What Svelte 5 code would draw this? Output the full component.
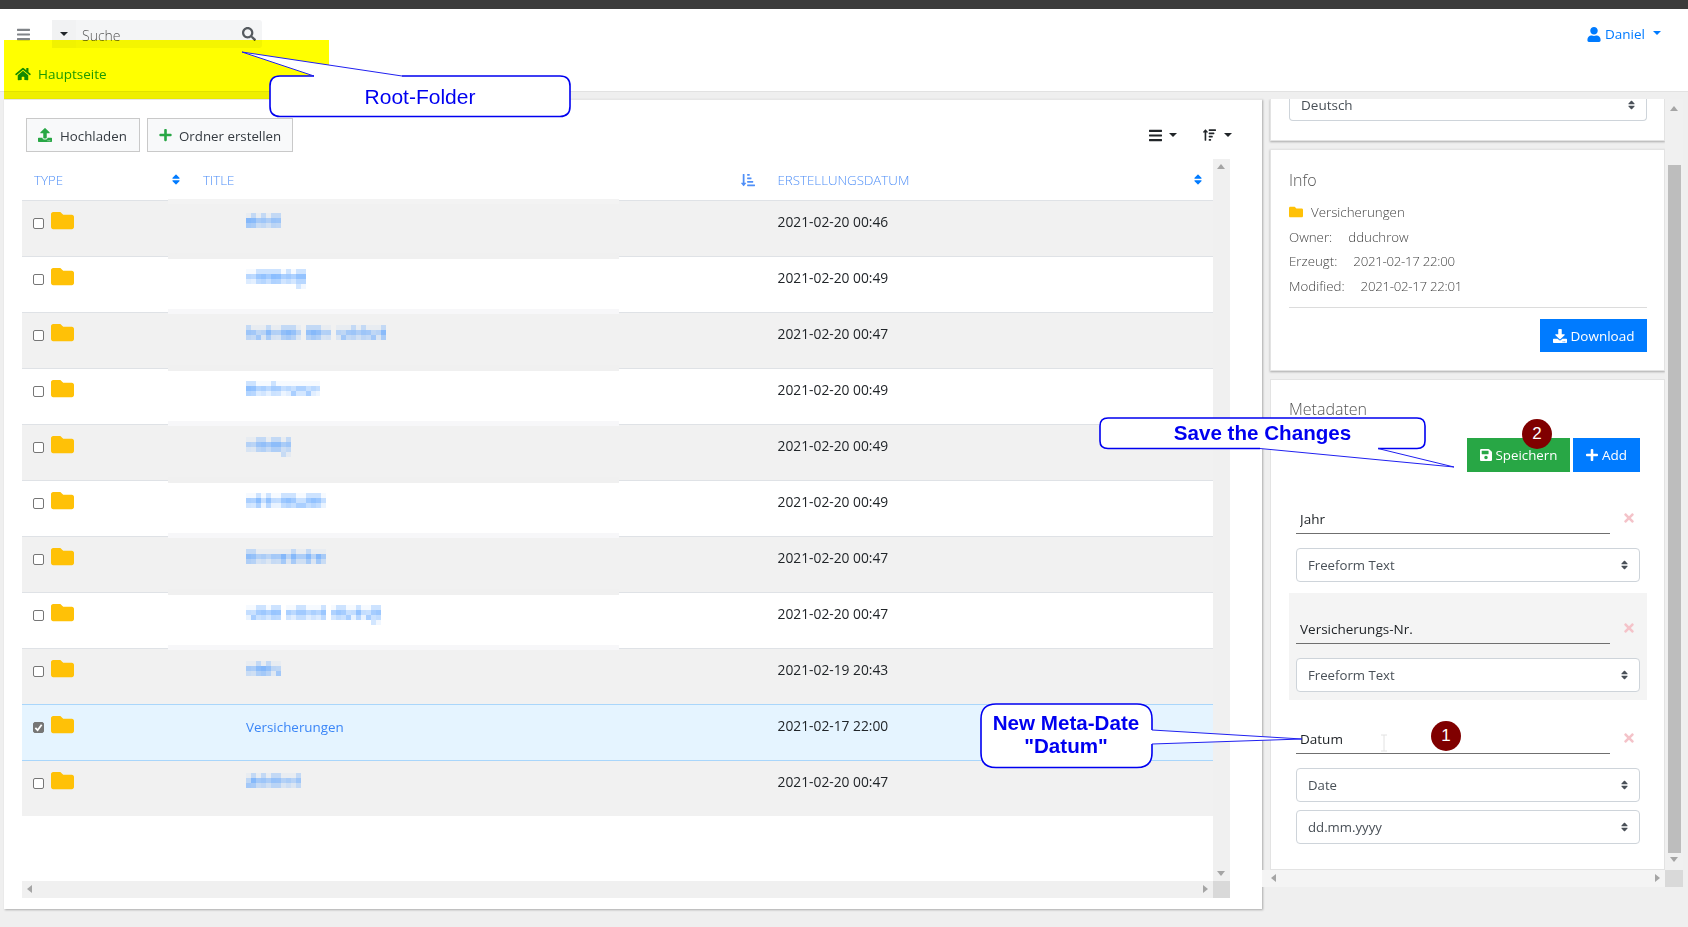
<script>
  // Font Awesome style glyphs: [viewBox width, path]
  const icons = {
    home: [576, 'M280.37 148.26L96 300.11V464a16 16 0 0 0 16 16l112.06-.29a16 16 0 0 0 15.92-16V368a16 16 0 0 1 16-16h64a16 16 0 0 1 16 16v95.64a16 16 0 0 0 16 16.05L464 480a16 16 0 0 0 16-16V300L295.67 148.26a12.19 12.19 0 0 0-15.3 0zM571.6 251.47L488 182.56V44.05a12 12 0 0 0-12-12h-56a12 12 0 0 0-12 12v72.61L318.47 43a48 48 0 0 0-61 0L4.34 251.47a12 12 0 0 0-1.6 16.9l25.5 31A12 12 0 0 0 45.15 301l235.22-193.74a12.19 12.19 0 0 1 15.3 0L530.9 301a12 12 0 0 0 16.9-1.6l25.5-31a12 12 0 0 0-1.7-16.93z'],
    search: [512, 'M505 442.7L405.3 343c-4.5-4.5-10.6-7-17-7H372c27.6-35.3 44-79.7 44-128C416 93.1 322.9 0 208 0S0 93.1 0 208s93.1 208 208 208c48.3 0 92.7-16.4 128-44v16.3c0 6.4 2.5 12.5 7 17l99.7 99.7c9.4 9.4 24.6 9.4 33.9 0l28.3-28.3c9.4-9.4 9.4-24.6.1-34zM208 336c-70.7 0-128-57.2-128-128 0-70.7 57.2-128 128-128 70.7 0 128 57.2 128 128 0 70.7-57.2 128-128 128z'],
    user: [448, 'M224 256c70.7 0 128-57.3 128-128S294.7 0 224 0 96 57.3 96 128s57.3 128 128 128zm89.6 32h-16.7c-22.2 10.2-46.9 16-72.9 16s-50.6-5.8-72.9-16h-16.7C60.2 288 0 348.2 0 422.4V464c0 26.5 21.5 48 48 48h352c26.5 0 48-21.5 48-48v-41.6c0-74.2-60.2-134.4-134.4-134.4z'],
    bars: [448, 'M16 132h416c8.837 0 16-7.163 16-16V76c0-8.837-7.163-16-16-16H16C7.163 60 0 67.163 0 76v40c0 8.837 7.163 16 16 16zm0 160h416c8.837 0 16-7.163 16-16v-40c0-8.837-7.163-16-16-16H16c-8.837 0-16 7.163-16 16v40c0 8.837 7.163 16 16 16zm0 160h416c8.837 0 16-7.163 16-16v-40c0-8.837-7.163-16-16-16H16c-8.837 0-16 7.163-16 16v40c0 8.837 7.163 16 16 16z'],
    plus: [448, 'M416 208H272V64c0-17.67-14.33-32-32-32h-32c-17.67 0-32 14.33-32 32v144H32c-17.67 0-32 14.33-32 32v32c0 17.67 14.33 32 32 32h144v144c0 17.67 14.33 32 32 32h32c17.67 0 32-14.33 32-32V304h144c17.67 0 32-14.33 32-32v-32c0-17.67-14.33-32-32-32z'],
    times: [352, 'M242.72 256l100.07-100.07c12.28-12.28 12.28-32.19 0-44.48l-22.24-22.24c-12.28-12.28-32.19-12.28-44.48 0L176 189.28 75.93 89.21c-12.28-12.28-32.19-12.28-44.48 0L9.21 111.45c-12.28 12.28-12.28 32.19 0 44.48L109.28 256 9.21 356.07c-12.28 12.28-12.28 32.19 0 44.48l22.24 22.24c12.28 12.28 32.2 12.28 44.48 0L176 322.72l100.07 100.07c12.28 12.28 32.2 12.28 44.48 0l22.24-22.24c12.28-12.28 12.28-32.19 0-44.48L242.72 256z'],
    folder: [512, 'M464 128H272l-64-64H48C21.49 64 0 85.49 0 112v288c0 26.51 21.49 48 48 48h416c26.51 0 48-21.49 48-48V176c0-26.51-21.49-48-48-48z'],
    sort: [320, 'M41 288h238c21.4 0 32.1 25.9 17 41L177 448c-9.4 9.4-24.6 9.4-33.9 0L24 329c-15.1-15.1-4.4-41 17-41zm255-105L177 64c-9.4-9.4-24.6-9.4-33.9 0L24 183c-15.1 15.1-4.4 41 17 41h238c21.4 0 32.1-25.9 17-41z'],
    upload: [512, 'M296 384h-80c-13.3 0-24-10.7-24-24V192h-87.7c-17.8 0-26.7-21.5-14.1-34.1L242.3 5.7c7.5-7.5 19.8-7.5 27.3 0l152.2 152.2c12.6 12.6 3.7 34.1-14.1 34.1H320v168c0 13.3-10.7 24-24 24zm216-8v112c0 13.3-10.7 24-24 24H24c-13.3 0-24-10.7-24-24V376c0-13.3 10.7-24 24-24h136v8c0 30.9 25.1 56 56 56h80c30.9 0 56-25.1 56-56v-8h136c13.3 0 24 10.7 24 24zm-124 88c0-11-9-20-20-20s-20 9-20 20 9 20 20 20 20-9 20-20zm64 0c0-11-9-20-20-20s-20 9-20 20 9 20 20 20 20-9 20-20z'],
    download: [512, 'M216 0h80c13.3 0 24 10.7 24 24v168h87.7c17.8 0 26.7 21.5 14.1 34.1L269.7 378.3c-7.5 7.5-19.8 7.5-27.3 0L90.1 226.1c-12.6-12.6-3.7-34.1 14.1-34.1H192V24c0-13.3 10.7-24 24-24zm296 376v112c0 13.3-10.7 24-24 24H24c-13.3 0-24-10.7-24-24V376c0-13.3 10.7-24 24-24h146.7l49 49c20.1 20.1 52.5 20.1 72.6 0l49-49H488c13.3 0 24 10.7 24 24zm-124 88c0-11-9-20-20-20s-20 9-20 20 9 20 20 20 20-9 20-20zm64 0c0-11-9-20-20-20s-20 9-20 20 9 20 20 20 20-9 20-20z'],
    save: [448, 'M433.941 129.941l-83.882-83.882A48 48 0 0 0 316.118 32H48C21.49 32 0 53.49 0 80v352c0 26.51 21.49 48 48 48h352c26.51 0 48-21.49 48-48V163.882a48 48 0 0 0-14.059-33.941zM224 416c-35.346 0-64-28.654-64-64 0-35.346 28.654-64 64-64s64 28.654 64 64c0 35.346-28.654 64-64 64zm96-304.52V212c0 6.627-5.373 12-12 12H76c-6.627 0-12-5.373-12-12V108c0-6.627 5.373-12 12-12h228.52c3.183 0 6.235 1.264 8.485 3.515l3.48 3.48A11.996 11.996 0 0 1 320 111.48z'],
    sortUp: [512, 'M16 160h48v304a16 16 0 0 0 16 16h32a16 16 0 0 0 16-16V160h48c14.21 0 21.38-17.24 11.31-27.31l-80-96a16 16 0 0 0-22.62 0l-80 96C-5.35 142.74 1.78 160 16 160zM304 416h-64a16 16 0 0 0-16 16v32a16 16 0 0 0 16 16h64a16 16 0 0 0 16-16v-32a16 16 0 0 0-16-16zm128-256H240a16 16 0 0 0-16 16v32a16 16 0 0 0 16 16h192a16 16 0 0 0 16-16v-32a16 16 0 0 0-16-16zm-64 128H240a16 16 0 0 0-16 16v32a16 16 0 0 0 16 16h128a16 16 0 0 0 16-16v-32a16 16 0 0 0-16-16zM496 32H240a16 16 0 0 0-16 16v32a16 16 0 0 0 16 16h256a16 16 0 0 0 16-16V48a16 16 0 0 0-16-16z'],
    sortDownAlt: [512, 'M176 352h-48V48a16 16 0 0 0-16-16H80a16 16 0 0 0-16 16v304H16c-14.19 0-21.37 17.24-11.31 27.31l80 96a16 16 0 0 0 22.62 0l80-96C197.35 369.26 190.22 352 176 352zM240 96h64a16 16 0 0 0 16-16V48a16 16 0 0 0-16-16h-64a16 16 0 0 0-16 16v32a16 16 0 0 0 16 16zm0 128h128a16 16 0 0 0 16-16v-32a16 16 0 0 0-16-16H240a16 16 0 0 0-16 16v32a16 16 0 0 0 16 16zm256 192H240a16 16 0 0 0-16 16v32a16 16 0 0 0 16 16h256a16 16 0 0 0 16-16v-32a16 16 0 0 0-16-16zm-256-64h192a16 16 0 0 0 16-16v-32a16 16 0 0 0-16-16H240a16 16 0 0 0-16 16v32a16 16 0 0 0 16 16z']
  };

  // w = width of the pixelated (censored) title, tail = has a descender, gaps = word breaks
  const rows = [
    { w: 35, date: '2021-02-20 00:46' },
    { w: 60, tail: true, date: '2021-02-20 00:49' },
    { w: 140, gaps: [11, 17], date: '2021-02-20 00:47' },
    { w: 74, date: '2021-02-20 00:49' },
    { w: 46, tail: true, date: '2021-02-20 00:49' },
    { w: 81, date: '2021-02-20 00:49' },
    { w: 81, date: '2021-02-20 00:47' },
    { w: 135, tail: true, gaps: [7, 16], date: '2021-02-20 00:47' },
    { w: 36, date: '2021-02-19 20:43' },
    { title: 'Versicherungen', selected: true, date: '2021-02-17 22:00' },
    { w: 55, date: '2021-02-20 00:47' }
  ];

  // mosaic cells for the censored titles
  function cells(row, seed) {
    const out = [];
    const n = Math.round(row.w / 5);
    for (let c = 0; c < n; c++) {
      if (row.gaps && row.gaps.includes(c)) continue;
      for (let r = 0; r < 3; r++) {
        const v = ((c * 37 + r * 91 + seed * 53 + c * c * 7) % 23) / 23;
        let a;
        if (r === 0) a = v > 0.55 ? 0.28 : 0.05;
        else if (r === 1) a = v * 0.38 + 0.3;
        else a = v * 0.4 + 0.1;
        out.push({ x: c * 5, y: r * 5, a: a.toFixed(2) });
      }
    }
    if (row.tail) {
      out.push({ x: (n - 2) * 5, y: 15, a: '0.25' }, { x: (n - 1) * 5, y: 15, a: '0.08' });
    }
    return out;
  }

  const fields = [
    { name: 'Jahr', selects: ['Freeform Text'] },
    { name: 'Versicherungs-Nr.', selects: ['Freeform Text'], shaded: true },
    { name: 'Datum', selects: ['Date', 'dd.mm.yyyy'] }
  ];

  // speech bubbles: fill outline, heavy box edge, thin tail
  const bubbles = [
    {
      fill: 'M280 76H314L242 52L402 76H560Q570 76 570 86V106.5Q570 116.5 560 116.5H280Q270 116.5 270 106.5V86Q270 76 280 76Z',
      box: 'M402 76H560Q570 76 570 86V106.5Q570 116.5 560 116.5H280Q270 116.5 270 106.5V86Q270 76 280 76H314',
      tail: 'M314 76L242 52L402 76'
    },
    {
      fill: 'M1108 418H1417Q1425 418 1425 426V441Q1425 448.5 1417 448.5H1378L1454 467L1260 448.5H1108Q1100 448.5 1100 441V426Q1100 418 1108 418Z',
      box: 'M1260 448.5H1108Q1100 448.5 1100 441V426Q1100 418 1108 418H1417Q1425 418 1425 426V441Q1425 448.5 1417 448.5H1378',
      tail: 'M1378 448.5L1454 467L1260 448.5'
    },
    {
      fill: 'M996 704H1137Q1152 704 1152 719V730L1302 739L1152 744V753Q1152 767.5 1137 767.5H996Q981 767.5 981 753V719Q981 704 996 704Z',
      box: 'M1152 744V753Q1152 767.5 1137 767.5H996Q981 767.5 981 753V719Q981 704 996 704H1137Q1152 704 1152 719V730',
      tail: 'M1152 730L1302 739L1152 744'
    }
  ];
</script>

{#snippet icon(name, w, h, color)}
  <svg class="ico" width={w} height={h} viewBox="0 0 {icons[name][0]} 512" fill={color} preserveAspectRatio="xMidYMid meet" aria-hidden="true"><path d={icons[name][1]} /></svg>
{/snippet}

{#snippet select(label)}
  <div class="select"><span>{label}</span>{@render icon('sort', 7, 12, '#4a5058')}</div>
{/snippet}

<div class="screen">
  <div class="topbar"></div>

  <header class="header">
    <div class="head-row">
      <button class="hamburger" aria-label="Menü">{@render icon('bars', 13, 15, '#808488')}</button>
      <div class="search">
        <span class="search-drop"><i class="caret dark"></i></span>
        <span class="search-text">Suche</span>
        {@render icon('search', 14, 14, '#555a5f')}
      </div>
      <div class="grow"></div>
      <div class="user">
        {@render icon('user', 14, 15, '#007bff')}
        <span>Daniel</span>
        <i class="caret blue"></i>
      </div>
    </div>
    <nav class="crumb">{@render icon('home', 16, 14, '#138a2f')}<span>Hauptseite</span></nav>
  </header>

  <div class="content">
    <main class="panel">
      <div class="toolbar">
        <button class="btn upload">{@render icon('upload', 14, 14, '#28a745')}<span>Hochladen</span></button>
        <button class="btn btn-plus">{@render icon('plus', 13, 14, '#28a745')}<span>Ordner erstellen</span></button>
        <div class="grow"></div>
        <div class="tool">{@render icon('bars', 13, 15, '#212529')}<i class="caret dark"></i></div>
        <div class="tool second">{@render icon('sortUp', 13, 14, '#212529')}<i class="caret dark"></i></div>
      </div>

      <div class="tablewrap">
        <div class="table">
          <div class="thead grid">
            <div class="th"><span>TYPE</span>{@render icon('sort', 8, 13, '#007bff')}</div>
            <div class="th"><span>TITLE</span>{@render icon('sortDownAlt', 14, 14, '#4f8ff7')}</div>
            <div class="th"><span>ERSTELLUNGSDATUM</span>{@render icon('sort', 8, 13, '#007bff')}</div>
          </div>
          {#each rows as row, i}
            <div class="tr grid" class:odd={i % 2 === 0} class:selected={row.selected}>
              {#if !row.selected && i !== 10}
                <div class="smudge" class:first={i === 0}></div>
              {/if}
              <div class="td first-cell">
                <span class="check" class:on={row.selected}>
                  {#if row.selected}
                    <svg width="9" height="9" viewBox="0 0 10 10" aria-hidden="true"><path d="M1.5 5.5L4 8L8.5 2" fill="none" stroke="#fff" stroke-width="2" /></svg>
                  {/if}
                </span>
                {@render icon('folder', 23, 23, '#ffc107')}
              </div>
              <div class="td title-cell">
                {#if row.title}
                  <span class="link">{row.title}</span>
                {:else}
                  <svg class="mosaic" width={row.w} height="20" aria-hidden="true">
                    {#each cells(row, i) as c}
                      <rect x={c.x} y={c.y} width="5" height="5" fill="#4d9bff" opacity={c.a} />
                    {/each}
                  </svg>
                {/if}
              </div>
              <div class="td date-cell">{row.date}</div>
            </div>
          {/each}
        </div>
        <div class="vbar">
          <i class="arrow up"></i>
          <i class="arrow down"></i>
        </div>
        <div class="hbar">
          <i class="arrow left"></i>
          <i class="arrow right"></i>
        </div>
        <div class="corner"></div>
      </div>
    </main>

    <aside class="side">
      <div class="side-view">
        <section class="card clipped">
          <div class="select lang"><span>Deutsch</span>{@render icon('sort', 7, 12, '#4a5058')}</div>
        </section>

        <section class="card info">
          <h5>Info</h5>
          <div class="line name">{@render icon('folder', 14, 14, '#ffc107')}<span>Versicherungen</span></div>
          <div class="line"><span>Owner:</span><span class="val">dduchrow</span></div>
          <div class="line"><span>Erzeugt:</span><span class="val stamp">2021-02-17 22:00</span></div>
          <div class="line"><span>Modified:</span><span class="val stamp">2021-02-17 22:01</span></div>
          <hr />
          <div class="actions">
            <button class="solid blue-btn dl">{@render icon('download', 14, 14, '#fff')}<span>Download</span></button>
          </div>
        </section>

        <section class="card meta">
          <h5>Metadaten</h5>
          <div class="actions tight">
            <button class="solid green-btn save">{@render icon('save', 12, 14, '#fff')}<span>Speichern</span></button>
            <button class="solid blue-btn add">{@render icon('plus', 12, 14, '#fff')}<span>Add</span></button>
          </div>
          {#each fields as f}
            <div class="field" class:shaded={f.shaded}>
              <div class="name-row">
                <input value={f.name} readonly />
                {@render icon('times', 10, 14, '#f4c3c9')}
              </div>
              {#each f.selects as s}
                {@render select(s)}
              {/each}
            </div>
          {/each}
        </section>
      </div>
      <div class="side-v">
        <i class="arrow up"></i>
        <div class="thumb"></div>
        <i class="arrow down"></i>
      </div>
      <div class="side-h">
        <i class="arrow left"></i>
        <i class="arrow right"></i>
      </div>
      <div class="corner"></div>
    </aside>
  </div>

  <!-- Anmerkungen über dem Screenshot -->
  <div class="highlight"></div>
  <svg class="notes" width="1688" height="927" aria-hidden="true">
    {#each bubbles as b}
      <path d={b.fill} fill="#fff" />
      <path d={b.box} fill="none" stroke="#0000f0" stroke-width="1.6" />
      <path d={b.tail} fill="none" stroke="#2020f0" stroke-width="1" />
    {/each}
    <text x="420" y="103.5" class="note big" text-anchor="middle">Root-Folder</text>
    <text x="1262.5" y="440" class="note strong" text-anchor="middle">Save the Changes</text>
    <text x="1066" y="730" class="note strong" text-anchor="middle">New Meta-Date</text>
    <text x="1066" y="753" class="note strong" text-anchor="middle">"Datum"</text>
    <path d="M1381 735h6M1384 735v16M1381 751h6" stroke="#e2e2e2" fill="none" />
  </svg>
  <div class="badge two">2</div>
  <div class="badge one">1</div>
</div>

<style>
  :global(body) {
    margin: 0;
    background: #efefef;
    font-family: "Open Sans", "Liberation Sans", sans-serif;
    font-size: 14px;
    color: #212529;
  }

  .screen { position: relative; width: 1688px; height: 927px; overflow: hidden; background: #efefef; isolation: isolate; }
  .topbar { height: 9px; background: #3b3b3b; }
  .grow { flex: 1; }
  .ico { display: block; flex: none; }

  /* kopf */
  .header { height: 83px; box-sizing: border-box; background: #fff; border-bottom: 1px solid #e2e2e2; }
  .head-row { display: flex; align-items: center; height: 28px; padding: 11px 27px 0 17px; }
  .hamburger { width: 35px; padding: 0; border: 0; background: none; display: flex; }
  .search { display: flex; align-items: center; width: 210px; height: 28px; background: #f4f5f6; border-radius: 3px; color: #555; padding-right: 6px; box-sizing: border-box; }
  .search-drop { width: 24px; height: 28px; background: #f1f2f3; display: flex; align-items: center; justify-content: center; }
  .search-text { flex: 1; padding: 2px 0 0 6px; font-weight: 300; }
  .user { display: flex; align-items: center; color: #007bff; gap: 4px; font-size: 13.5px; }
  .user .caret { margin-left: 4px; margin-top: -3px; }

  .caret { display: block; width: 0; height: 0; border-left: 4.5px solid transparent; border-right: 4.5px solid transparent; border-top: 4.5px solid #212529; }
  .caret.blue { border-top-color: #007bff; }

  .crumb { display: flex; align-items: center; gap: 7px; margin: 17px 0 0 15px; height: 18px; color: #1e9a35; font-size: 13.5px; }

  /* hauptbereich */
  .content { display: flex; margin: 7px 0 0 4px; align-items: flex-start; }
  .panel { width: 1258px; height: 810px; box-sizing: border-box; background: #fff; padding: 19px 30px 0 18px; box-shadow: 1px 1px 2px #aaa; border-top: 1px solid #e6e6e6; }

  .toolbar { display: flex; align-items: center; height: 34px; margin-top: -1px; }
  .btn { display: flex; align-items: center; gap: 8px; height: 34px; padding: 2px 0 0 11px; margin: 0 7px 0 4px; background: #f8f9fa; border: 1px solid #c9c9c9; font: inherit; font-size: 13.3px; color: #343a40; box-sizing: border-box; white-space: nowrap; }
  .btn.upload { width: 114px; }
  .btn-plus { width: 146px; margin-left: 0; gap: 7px; }
  .btn .ico { margin-top: -2px; }
  .tool { display: flex; align-items: center; gap: 7px; }
  .tool.second { margin-left: 26px; gap: 8px; }

  .tablewrap { display: grid; grid-template-columns: 1191px 17px; grid-template-rows: 722px 17px; margin-top: 7px; }
  .table { background: #fff; overflow: hidden; }
  .grid { display: grid; grid-template-columns: 169px 574.5px 1fr; }
  .thead { height: 41px; }
  .th { display: flex; align-items: center; justify-content: space-between; padding: 0 11px 0 12px; color: #4f8ff7; font-weight: 300; font-size: 13.3px; }

  .tr { position: relative; height: 56px; box-sizing: border-box; border-top: 1px solid #dfe2e6; background: #fff; font-size: 13.8px; }
  .tr.odd { background: #f1f1f1; }
  .tr.selected { background: #e5f4ff; border-top-color: #a9d6fb; box-shadow: 0 1px 0 #a9d6fb; z-index: 1; }
  .smudge { position: absolute; left: 146px; width: 451px; top: -4px; height: 6px; background: #f0f0f0; }
  .odd .smudge { height: 5px; background: #f7f7f9; }
  .odd .smudge.first { top: -2px; height: 5px; background: #f3f3f3; }

  .td { padding: 11px 0 0 12px; line-height: 20px; position: relative; }
  .first-cell { display: flex; padding: 0 0 0 11px; }
  .first-cell .ico { margin: 8px 0 0 7px; }
  .check { display: flex; align-items: center; justify-content: center; width: 11px; height: 11px; margin-top: 17px; box-sizing: border-box; border: 1px solid #767676; border-radius: 2px; background: #fff; }
  .check.on { background: #767676; }
  .title-cell { padding: 12px 0 0 55px; }
  .mosaic { display: block; }
  .link { color: #3b86f7; font-size: 13.4px; }
  .date-cell { color: #212529; }

  /* scrollbalken */
  .vbar, .side-v { position: relative; background: #f0f0f0; }
  .hbar, .side-h { position: relative; background: #f0f0f0; }
  .corner { background: #d9d9d9; }
  .arrow { position: absolute; width: 0; height: 0; border: 4px solid transparent; }
  .arrow.up { top: 5px; left: 4px; border-top: 0; border-bottom: 5px solid #a5a5a5; }
  .arrow.down { bottom: 5px; left: 4px; border-bottom: 0; border-top: 5px solid #a5a5a5; }
  .arrow.left { left: 5px; top: 4px; border-left: 0; border-right: 5px solid #a5a5a5; }
  .arrow.right { right: 5px; top: 4px; border-right: 0; border-left: 5px solid #a5a5a5; }

  /* rechte spalte */
  .side { display: grid; grid-template-columns: 403px 18px; grid-template-rows: 771px 17px; margin-left: 0; }
  .side-view { padding-left: 8px; overflow: hidden; display: flex; flex-direction: column; gap: 8px; }
  .card { flex: none; width: 395px; box-sizing: border-box; background: #fff; padding: 0 17px 0 18px; border: 1px solid #e3e3e3; box-shadow: 0 1px 2px #aaa; }
  .card.clipped { height: 42px; display: flex; align-items: flex-end; padding-bottom: 19px; border-top: 0; }
  .card.info { height: 222px; padding-top: 20px; }
  .card.meta { height: 491px; padding-top: 19px; box-shadow: none; }
  .side-v { height: 771px; }
  .side-v .arrow.up { top: 7px; left: 5px; }
  .side-v .arrow.down { bottom: 8px; left: 5px; }
  .thumb { position: absolute; top: 66px; bottom: 17px; left: 3px; width: 13px; background: #bdbdbd; }
  .side-h { background: #f4f4f4; }
  .side-h .arrow.left { left: 9px; }
  .side-h .arrow.right { right: 5px; }

  h5 { margin: 0; font-weight: 300; font-size: 16px; line-height: 20px; color: #555; }
  .line { display: flex; align-items: center; height: 24.6px; font-weight: 300; color: #444; font-size: 13.3px; }
  .line.name { margin-top: 10px; gap: 8px; }
  .val { margin-left: 16px; }
  .val.stamp { letter-spacing: -0.3px; }
  hr { margin: 9px 0 0; border: 0; border-top: 1px solid #dcdcdc; }

  .actions { display: flex; justify-content: flex-end; margin-top: 11px; }
  .actions.tight { gap: 3px; margin: 19px 7px 0 0; }
  .solid { display: flex; align-items: center; justify-content: center; gap: 4px; height: 34px; padding: 0 11px; border: 0; color: #fff; font: inherit; font-size: 13.5px; box-sizing: border-box; }
  .dl { height: 33px; width: 107px; }
  .save { width: 103px; padding: 0; font-size: 13.3px; }
  .add { width: 67px; padding: 0; }
  .blue-btn { background: #007bff; }
  .green-btn { background: #28a745; }

  .field { height: 107px; box-sizing: border-box; padding: 20px 7px 0; margin-top: 3px; }
  .actions + .field { margin-top: 11px; }
  .field.shaded { background: #f4f4f4; }
  .name-row { display: flex; align-items: center; gap: 14px; }
  .name-row input { width: 314px; height: 31px; box-sizing: border-box; padding: 2px 0 0 4px; border: 0; border-bottom: 1px solid #6f6f6f; background: transparent; font: inherit; font-size: 13.5px; color: #212529; outline: none; }
  .name-row .ico { margin-top: -2px; }

  .select { display: flex; align-items: center; justify-content: space-between; height: 34px; box-sizing: border-box; padding: 0 11px; margin-top: 14px; background: #fff; border: 1px solid #ced4da; border-radius: 4px; color: #495057; font-size: 13.2px; }
  .select + .select { margin-top: 8px; }
  .select.lang { width: 100%; height: 23px; margin: 0; border-top: 0; border-radius: 0 0 4px 4px; padding-bottom: 8px; line-height: 14px; font-size: 13.5px; }

  /* markierung und sprechblasen */
  .highlight { position: absolute; left: 4px; top: 40px; width: 325px; height: 59px; background: #ffff00; mix-blend-mode: multiply; }
  .notes { position: absolute; left: 0; top: 0; pointer-events: none; z-index: 2; }
  .note { font-family: "Liberation Sans", Arial, sans-serif; font-size: 20.6px; fill: #0000f0; }
  .note.big { font-size: 21px; }
  .note.strong { font-weight: 700; }
  .badge { position: absolute; z-index: 3; width: 30px; height: 30px; border-radius: 50%; background: #800000; color: #fff; text-align: center; font: 17px/30px "Liberation Sans", Arial, sans-serif; }
  .badge.two { left: 1522px; top: 419px; }
  .badge.one { left: 1431px; top: 721px; }
</style>
